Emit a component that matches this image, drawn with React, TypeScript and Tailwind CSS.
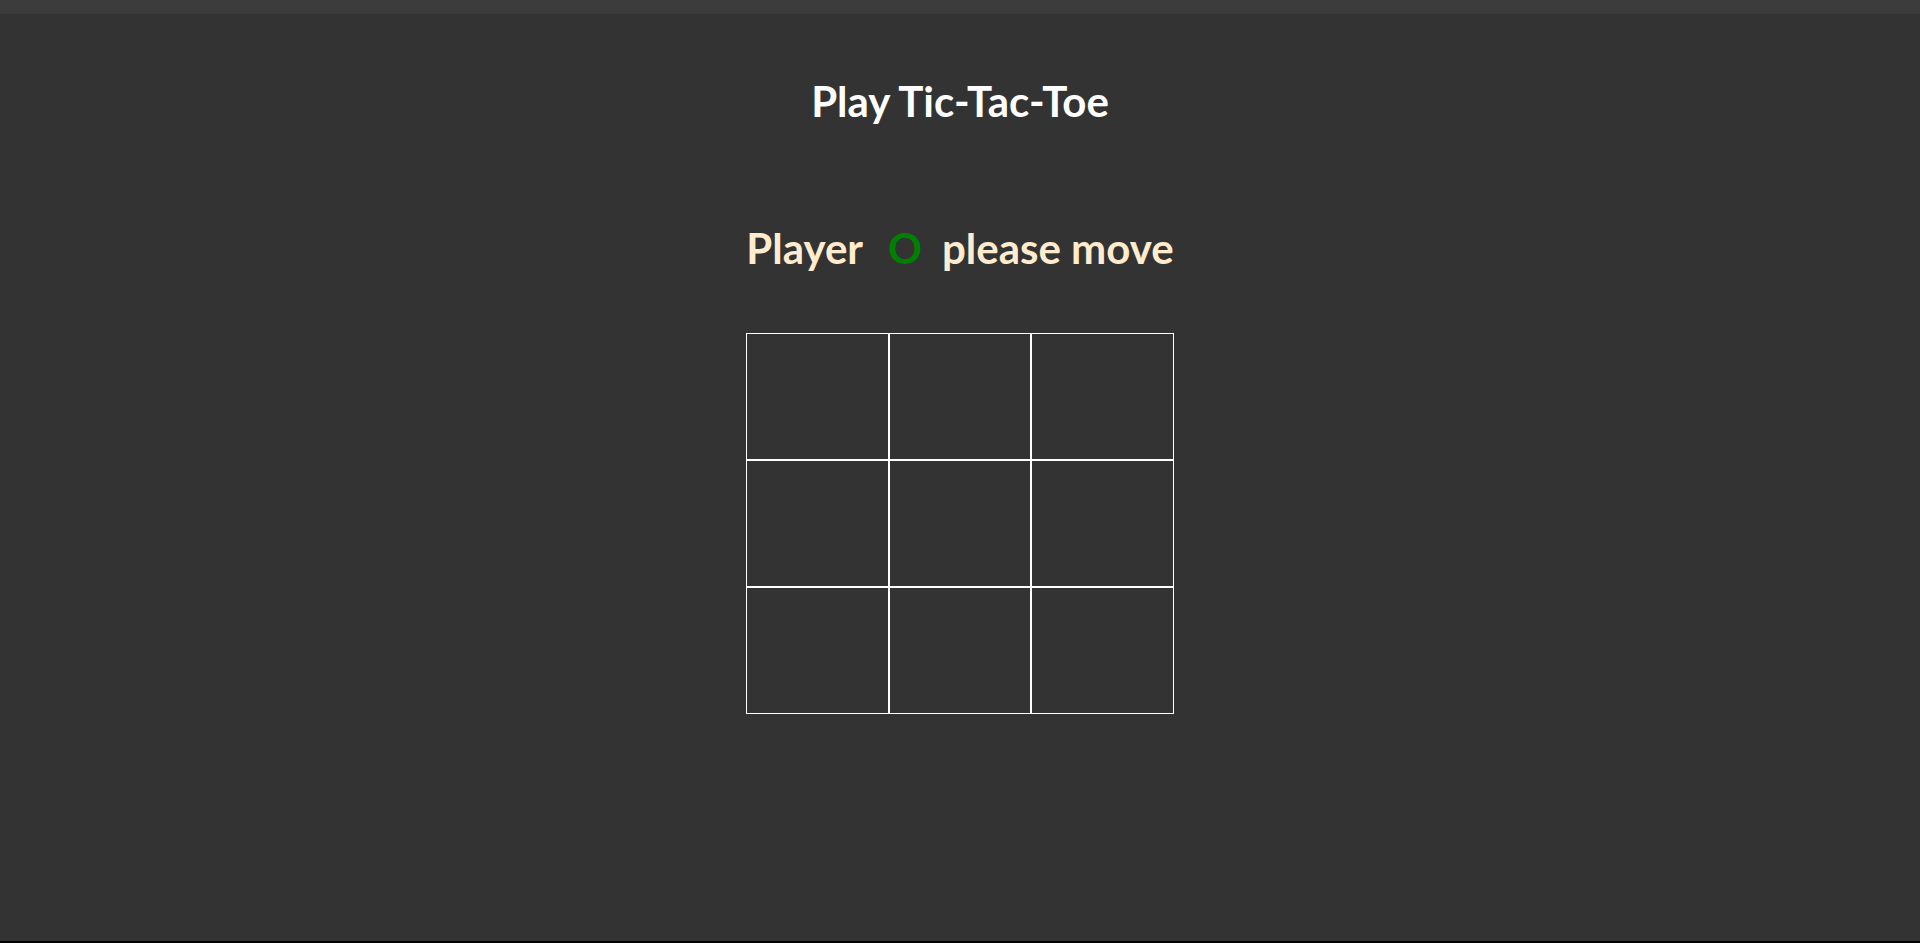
import React from "react";

export default function App() {
  const cells = Array.from({ length: 9 });
  return (
    <div
      className="flex h-[943px] w-full flex-col bg-black"
      style={{ fontFamily: "Lato, 'Open Sans', sans-serif" }}
    >
      <div className="h-[14px] w-full shrink-0 bg-[#3c3c3c]" />
      <div className="flex flex-1 flex-col items-center bg-[#333333]">
        <h1 className="mt-[63px] text-[42px] font-bold leading-[48px] text-white">
          Play Tic-Tac-Toe
        </h1>
        <div className="mt-[99px] flex items-baseline text-[42px] font-bold leading-[48px] text-[#ffebcd]">
          <span>Player</span>
          <span className="ml-[25px] mr-[20px] text-[#008000]">O</span>
          <span>please move</span>
        </div>
        <div className="mt-[61px] grid w-[428px] grid-cols-3">
          {cells.map((_, i) => (
            <div key={i} className="h-[127px] border border-white bg-[#333333]" />
          ))}
        </div>
      </div>
      <div className="h-[2px] w-full shrink-0 bg-black" />
    </div>
  );
}
